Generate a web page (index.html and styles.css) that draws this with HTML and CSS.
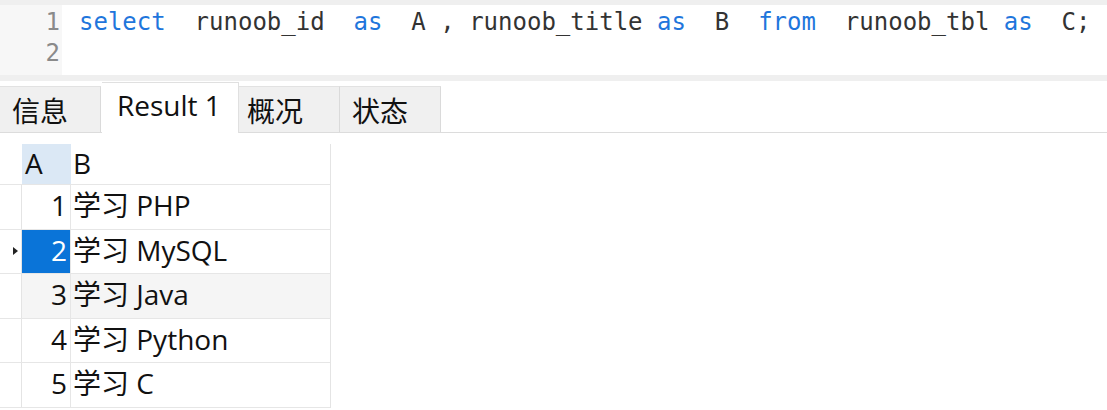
FILE: index.html
```html
<!DOCTYPE html>
<html lang="zh">
<head>
<meta charset="utf-8">
<title>Query</title>
<link rel="stylesheet" href="styles.css">
</head>
<body>
<div class="top">
  <div class="editor">
    <div class="gutter">
      <div class="ln">1</div>
      <div class="ln">2</div>
    </div>
    <div class="code">
      <div class="line"><span class="kw">select</span>  runoob_id  <span class="kw">as</span>  A , runoob_title <span class="kw">as</span>  B  <span class="kw">from</span>  runoob_tbl <span class="kw">as</span>  C;</div>
      <div class="line"></div>
    </div>
  </div>
</div>
<div class="tabbar">
  <div class="tab">信息</div>
  <div class="tab active">Result 1</div>
  <div class="tab">概况</div>
  <div class="tab">状态</div>
</div>
<div class="grid">
  <div class="row head">
    <div class="ind"></div>
    <div class="ca hdr">A</div>
    <div class="cb">B</div>
  </div>
  <div class="row">
    <div class="ind"></div>
    <div class="ca">1</div>
    <div class="cb">学习 PHP</div>
  </div>
  <div class="row">
    <div class="ind"><span class="arrow"></span></div>
    <div class="ca sel">2</div>
    <div class="cb">学习 MySQL</div>
  </div>
  <div class="row alt">
    <div class="ind"></div>
    <div class="ca">3</div>
    <div class="cb">学习 Java</div>
  </div>
  <div class="row">
    <div class="ind"></div>
    <div class="ca">4</div>
    <div class="cb">学习 Python</div>
  </div>
  <div class="row">
    <div class="ind"></div>
    <div class="ca">5</div>
    <div class="cb">学习 C</div>
  </div>
</div>
</body>
</html>
```

FILE: styles.css
```css
html, body {
  margin: 0;
  padding: 0;
  background: #ffffff;
}
body {
  font-family: "Open Sans", "Noto Sans CJK SC", sans-serif;
  color: #111;
  width: 1107px;
  height: 410px;
  overflow: hidden;
}
.top {
  background: #efefef;
  padding: 5px 0 6px 0;
}
.editor {
  display: flex;
  height: 70px;
  background: #ffffff;
}
.gutter {
  width: 62px;
  background: #f7f7f7;
  padding-top: 2px;
  box-sizing: border-box;
}
.ln {
  font-family: "DejaVu Sans Mono", monospace;
  font-size: 24px;
  line-height: 31px;
  color: #8a8a8a;
  text-align: right;
  padding-right: 2px;
}
.code {
  flex: 1;
  padding: 2px 0 0 17px;
}
.line {
  font-family: "DejaVu Sans Mono", monospace;
  font-size: 24px;
  line-height: 31px;
  height: 31px;
  white-space: pre;
  color: #333;
}
.kw {
  color: #1f76dc;
}
.tabbar {
  display: flex;
  align-items: flex-end;
  height: 52px;
  border-bottom: 1px solid #dcdcdc;
  box-sizing: border-box;
}
.tab {
  height: 46px;
  width: 101px;
  box-sizing: border-box;
  background: #f0f0f0;
  border-right: 1px solid #dadada;
  border-top: 1px solid #e2e2e2;
  padding-left: 12px;
  font-size: 28px;
  display: flex;
  align-items: center;
  color: #111;
}
.tab.active {
  width: 137px;
  height: 51px;
  background: #ffffff;
  border-top: 1px solid #e0e0e0;
  border-right: 1px solid #e0e0e0;
  margin-bottom: -1px;
  padding-left: 15px;
  padding-bottom: 6px;
  margin-left: 1px;
}
.tab.active + .tab {
  padding-left: 8px;
}
.grid {
  margin-top: 11px;
  width: 331px;
  border-right: 1px solid #e4e4e4;
  box-sizing: border-box;
}
.row {
  display: flex;
  height: 44.5px;
  box-sizing: border-box;
  border-bottom: 1px solid #e6e6e6;
  font-size: 28px;
  line-height: 1;
}
.row .ca, .row .cb {
  padding-bottom: 3px;
}
.row.head {
  height: 41px;
}
.ind {
  width: 22px;
  border-right: 1px solid #e4e4e4;
  box-sizing: border-box;
  display: flex;
  align-items: center;
  justify-content: flex-start;
}
.head .ind {
  border-right: none;
}
.ca {
  width: 49px;
  box-sizing: border-box;
  border-right: 1px solid #e6e6e6;
  padding-right: 3px;
  display: flex;
  align-items: center;
  justify-content: flex-end;
}
.ca.hdr {
  background: #dbe8f5;
  justify-content: flex-start;
  padding-left: 3px;
  border-right: none;
}
.ca.sel {
  background: #0a74d8;
  color: #ffffff;
}
.cb {
  flex: 1;
  padding-left: 2px;
  display: flex;
  align-items: center;
}
.alt .ca, .alt .cb {
  background: #f5f5f5;
}
.arrow {
  width: 0;
  height: 0;
  border-top: 4px solid transparent;
  border-bottom: 4px solid transparent;
  border-left: 5px solid #222;
  margin-left: 13px;
}
```
